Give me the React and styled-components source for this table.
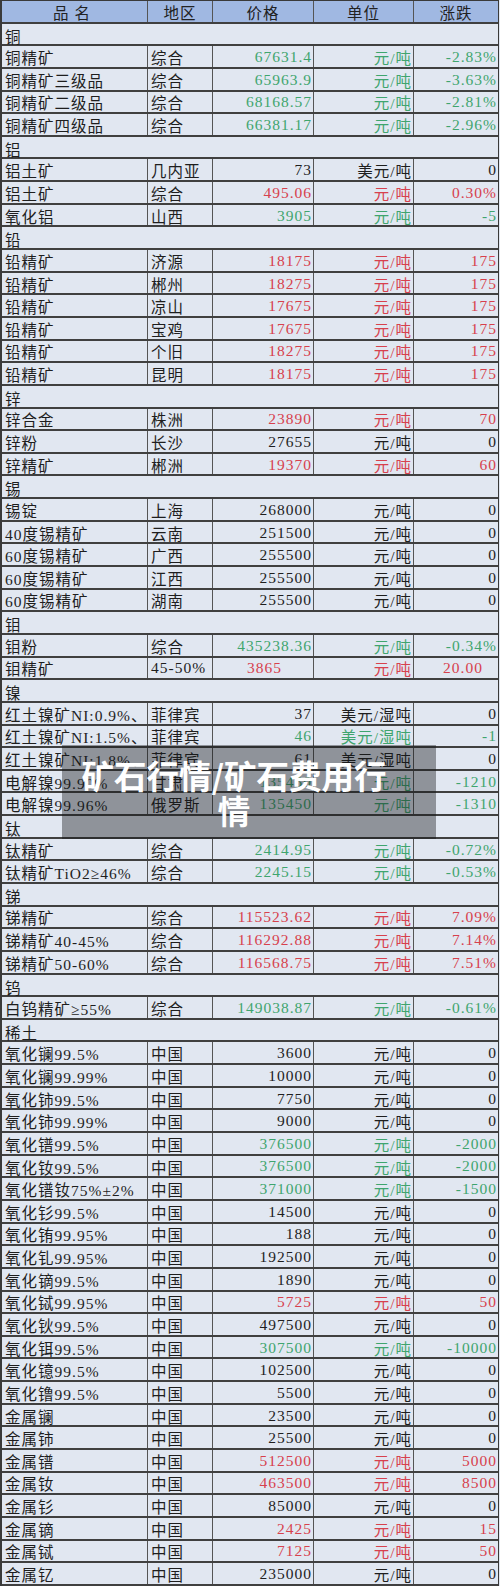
import React from "react";
import styled, { createGlobalStyle } from "styled-components";

const GlobalStyle = createGlobalStyle`
  html, body { margin: 0; padding: 0; background: #e1e7f1; }
  * { box-sizing: border-box; }
`;

const Page = styled.div`
  position: relative;
  width: 500px;
  height: 1586px;
  background: #e1e7f1;
  font-family: "Liberation Serif", "Noto Sans CJK SC", serif;
  font-size: 15.5px;
  letter-spacing: 1px;
  color: #1e1e1e;
`;

const Table = styled.div`
  display: flex;
  flex-direction: column;
  width: 499px;
  height: 1586px;
  border-left: 2px solid #3a3a3a;
  border-right: 1px solid #3a3a3a;
  border-top: 1px solid #3a3a3a;
`;

const Row = styled.div`
  flex: 1 1 0;
  min-height: 0;
  display: grid;
  grid-template-columns: ${(p) => (p.$category ? "1fr" : "146px 65px 101px 100px 1fr")};
  border-bottom: 2px solid #404040;
  background: ${(p) => (p.$header ? "#a0b8e2" : "#e1e7f1")};
`;

const tones = { k: "#1e1e1e", g: "#3fa56e", r: "#d7414d" };

const Cell = styled.div`
  display: flex;
  align-items: center;
  justify-content: ${(p) =>
    p.$align === "right" ? "flex-end" : p.$align === "center" ? "center" : "flex-start"};
  padding: ${(p) => (p.$align === "right" ? "1px 1px 0 0" : "1px 0 0 3px")};
  padding-left: ${(p) => (p.$shift ? `${p.$shift}px` : undefined)};
  border-right: ${(p) => (p.$last ? "none" : "1px solid #555")};
  color: ${(p) => tones[p.$tone || "k"]};
  white-space: nowrap;
  overflow: hidden;
  letter-spacing: ${(p) => (p.$wide ? "6px" : "inherit")};
`;

const HeaderCell = styled(Cell)`
  justify-content: center;
  padding: 1px 0 0 0;
  color: #222;
`;

const CategoryCell = styled.div`
  display: flex;
  align-items: center;
  padding: 1px 0 0 3px;
  color: #1e1e1e;
`;

const Overlay = styled.div`
  position: absolute;
  left: 62px;
  top: 745px;
  width: 374px;
  height: 94px;
  background: rgba(20, 22, 26, 0.4);
  padding: 12px 44px 12px 14px;
  display: flex;
  align-items: center;
`;

const Title = styled.div`
  width: 318px;
  text-align: center;
  font-family: "Noto Sans CJK SC", "Noto Sans", sans-serif;
  font-weight: 700;
  font-size: 32.5px;
  line-height: 35px;
  letter-spacing: 0;
  color: #ffffff;
`;

const data = [
  { cat: "铜" },
  ["铜精矿", "综合", "67631.4", "元/吨", "-2.83%", "g"],
  ["铜精矿三级品", "综合", "65963.9", "元/吨", "-3.63%", "g"],
  ["铜精矿二级品", "综合", "68168.57", "元/吨", "-2.81%", "g"],
  ["铜精矿四级品", "综合", "66381.17", "元/吨", "-2.96%", "g"],
  { cat: "铝" },
  ["铝土矿", "几内亚", "73", "美元/吨", "0", "k"],
  ["铝土矿", "综合", "495.06", "元/吨", "0.30%", "r"],
  ["氧化铝", "山西", "3905", "元/吨", "-5", "g"],
  { cat: "铅" },
  ["铅精矿", "济源", "18175", "元/吨", "175", "r"],
  ["铅精矿", "郴州", "18275", "元/吨", "175", "r"],
  ["铅精矿", "凉山", "17675", "元/吨", "175", "r"],
  ["铅精矿", "宝鸡", "17675", "元/吨", "175", "r"],
  ["铅精矿", "个旧", "18275", "元/吨", "175", "r"],
  ["铅精矿", "昆明", "18175", "元/吨", "175", "r"],
  { cat: "锌" },
  ["锌合金", "株洲", "23890", "元/吨", "70", "r"],
  ["锌粉", "长沙", "27655", "元/吨", "0", "k"],
  ["锌精矿", "郴洲", "19370", "元/吨", "60", "r"],
  { cat: "锡" },
  ["锡锭", "上海", "268000", "元/吨", "0", "k"],
  ["40度锡精矿", "云南", "251500", "元/吨", "0", "k"],
  ["60度锡精矿", "广西", "255500", "元/吨", "0", "k"],
  ["60度锡精矿", "江西", "255500", "元/吨", "0", "k"],
  ["60度锡精矿", "湖南", "255500", "元/吨", "0", "k"],
  { cat: "钼" },
  ["钼粉", "综合", "435238.36", "元/吨", "-0.34%", "g"],
  ["钼精矿", "45-50%", "3865", "元/吨", "20.00", "r", true],
  { cat: "镍" },
  ["红土镍矿NI:0.9%、", "菲律宾", "37", "美元/湿吨", "0", "k"],
  ["红土镍矿NI:1.5%、", "菲律宾", "46", "美元/湿吨", "-1", "g"],
  ["红土镍矿NI:1.8%、", "菲律宾", "61", "美元/湿吨", "0", "k"],
  ["电解镍99.90%", "甘肃", "135450", "元/吨", "-1210", "g"],
  ["电解镍99.96%", "俄罗斯", "135450", "元/吨", "-1310", "g"],
  { cat: "钛" },
  ["钛精矿", "综合", "2414.95", "元/吨", "-0.72%", "g"],
  ["钛精矿TiO2≥46%", "综合", "2245.15", "元/吨", "-0.53%", "g"],
  { cat: "锑" },
  ["锑精矿", "综合", "115523.62", "元/吨", "7.09%", "r"],
  ["锑精矿40-45%", "综合", "116292.88", "元/吨", "7.14%", "r"],
  ["锑精矿50-60%", "综合", "116568.75", "元/吨", "7.51%", "r"],
  { cat: "钨" },
  ["白钨精矿≥55%", "综合", "149038.87", "元/吨", "-0.61%", "g"],
  { cat: "稀土" },
  ["氧化镧99.5%", "中国", "3600", "元/吨", "0", "k"],
  ["氧化镧99.99%", "中国", "10000", "元/吨", "0", "k"],
  ["氧化铈99.5%", "中国", "7750", "元/吨", "0", "k"],
  ["氧化铈99.99%", "中国", "9000", "元/吨", "0", "k"],
  ["氧化镨99.5%", "中国", "376500", "元/吨", "-2000", "g"],
  ["氧化钕99.5%", "中国", "376500", "元/吨", "-2000", "g"],
  ["氧化镨钕75%±2%", "中国", "371000", "元/吨", "-1500", "g"],
  ["氧化钐99.5%", "中国", "14500", "元/吨", "0", "k"],
  ["氧化铕99.95%", "中国", "188", "元/吨", "0", "k"],
  ["氧化钆99.95%", "中国", "192500", "元/吨", "0", "k"],
  ["氧化镝99.5%", "中国", "1890", "元/吨", "0", "k"],
  ["氧化铽99.95%", "中国", "5725", "元/吨", "50", "r"],
  ["氧化钬99.5%", "中国", "497500", "元/吨", "0", "k"],
  ["氧化铒99.5%", "中国", "307500", "元/吨", "-10000", "g"],
  ["氧化镱99.5%", "中国", "102500", "元/吨", "0", "k"],
  ["氧化镥99.5%", "中国", "5500", "元/吨", "0", "k"],
  ["金属镧", "中国", "23500", "元/吨", "0", "k"],
  ["金属铈", "中国", "25500", "元/吨", "0", "k"],
  ["金属镨", "中国", "512500", "元/吨", "5000", "r"],
  ["金属钕", "中国", "463500", "元/吨", "8500", "r"],
  ["金属钐", "中国", "85000", "元/吨", "0", "k"],
  ["金属镝", "中国", "2425", "元/吨", "15", "r"],
  ["金属铽", "中国", "7125", "元/吨", "50", "r"],
  ["金属钇", "中国", "235000", "元/吨", "0", "k"],
];

function DataRow({ item }) {
  const [name, region, price, unit, change, tone, centered] = item;
  return (
    <Row>
      <Cell>{name}</Cell>
      <Cell>{region}</Cell>
      <Cell $align={centered ? "center" : "right"} $tone={tone}>{price}</Cell>
      <Cell $align="right" $tone={tone}>{unit}</Cell>
      <Cell $align={centered ? "center" : "right"} $shift={centered ? 14 : 0} $tone={tone} $last>
        {change}
      </Cell>
    </Row>
  );
}

export default function App() {
  return (
    <>
      <GlobalStyle />
      <Page>
        <Table>
          <Row $header>
            <HeaderCell $wide>品名</HeaderCell>
            <HeaderCell>地区</HeaderCell>
            <HeaderCell>价格</HeaderCell>
            <HeaderCell>单位</HeaderCell>
            <HeaderCell $last>涨跌</HeaderCell>
          </Row>
          {data.map((item, i) =>
            item.cat ? (
              <Row key={i} $category>
                <CategoryCell>{item.cat}</CategoryCell>
              </Row>
            ) : (
              <DataRow key={i} item={item} />
            )
          )}
        </Table>
        <Overlay>
          <Title>矿石行情/矿石费用行情</Title>
        </Overlay>
      </Page>
    </>
  );
}
